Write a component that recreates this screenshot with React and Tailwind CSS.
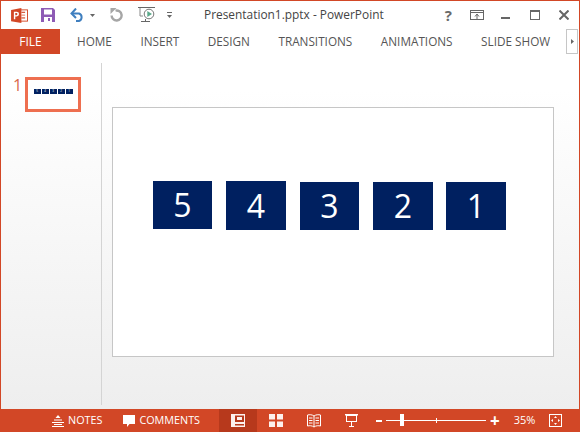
import React from "react";

const TABS = ["HOME", "INSERT", "DESIGN", "TRANSITIONS", "ANIMATIONS", "SLIDE SHOW"];

// numbers on the slide, with the small slip each box has
const BOXES = [
  { n: 5, cls: "w-[59px] h-[48px]", mt: "mt-0" },
  { n: 4, cls: "w-[60px] h-[49px]", mt: "mt-0" },
  { n: 3, cls: "w-[59px] h-[48px]", mt: "mt-px" },
  { n: 2, cls: "w-[60px] h-[48px]", mt: "mt-px" },
  { n: 1, cls: "w-[60px] h-[48px] -ml-px", mt: "mt-px" },
];

function PptIcon() {
  return (
    <svg width="17" height="15" viewBox="0 0 18 16" className="block">
      <rect x="8" y="2" width="9.5" height="12" fill="#fff" stroke="#d24726" />
      <rect x="11" y="4" width="4" height="1.2" fill="#d24726" />
      <rect x="11" y="7" width="4" height="1.2" fill="#e88a70" />
      <rect x="11" y="10" width="4" height="1.2" fill="#d24726" />
      <path d="M0 2 L11 0 V16 L0 14 Z" fill="#d24726" />
      <path d="M3 12 V4 H6 A2.4 2.4 0 0 1 6 9 H4.5 V12 Z M4.5 5.4 V7.6 H5.7 A1.1 1.1 0 0 0 5.7 5.4 Z" fill="#fff" fillRule="evenodd" />
    </svg>
  );
}

function SaveIcon() {
  return (
    <svg width="14" height="14" viewBox="0 0 14 14" className="block">
      <path d="M0 0 H12 L14 2 V14 H0 Z" fill="#8e5bb5" />
      <rect x="3" y="1.5" width="8" height="5" fill="#fff" />
      <rect x="3" y="9" width="8" height="5" fill="#fff" />
      <rect x="7" y="10" width="2" height="3" fill="#8e5bb5" />
    </svg>
  );
}

function UndoIcon() {
  return (
    <svg width="15" height="14" viewBox="0 0 15 14" className="block" fill="none">
      <path d="M2 5.5 H9 A4 4 0 0 1 9 13 H6" stroke="#3f7fbf" strokeWidth="2" />
      <path d="M6 0.5 L1.5 5.5 L6 10" stroke="#3f7fbf" strokeWidth="2" />
    </svg>
  );
}

function Caret({ color = "#666" }) {
  return (
    <svg width="5" height="3" viewBox="0 0 5 3" className="block">
      <path d="M0 0 H5 L2.5 3 Z" fill={color} />
    </svg>
  );
}

function RedoIcon() {
  return (
    <svg width="13" height="14" viewBox="0 0 13 14" className="block" fill="none">
      <path d="M5.5 2.6 A5 5 0 1 1 1.6 7.5" stroke="#a6a6a6" strokeWidth="2.4" />
      <path d="M0.5 0 H6.5 L0.5 6 Z" fill="#a6a6a6" />
    </svg>
  );
}

function StartShowIcon() {
  return (
    <svg width="17" height="16" viewBox="0 0 17 16" className="block" fill="none">
      <path d="M0 0.5 H17" stroke="#666" />
      <path d="M2 1 V9 H5" stroke="#888" />
      <circle cx="11" cy="7" r="4.8" fill="#fff" stroke="#777" />
      <path d="M9.3 4 L14 7 L9.3 10 Z" fill="#5ba98a" />
      <path d="M7.5 12 V15 M3 14.5 H12" stroke="#666" />
    </svg>
  );
}

function QatMore() {
  return (
    <svg width="5" height="6" viewBox="0 0 5 6" className="block">
      <rect width="5" height="1" fill="#666" />
      <path d="M0 3 H5 L2.5 6 Z" fill="#666" />
    </svg>
  );
}

function WindowButtons() {
  return (
    <div className="flex items-center">
      <span className="text-[15px] font-bold leading-none text-[#6a6a6a]">?</span>
      <svg width="14" height="10" viewBox="0 0 14 10" className="block ml-[18px]">
        <rect x="0.5" y="0.5" width="13" height="9" fill="none" stroke="#666" />
        <path d="M0.5 2.5 H13.5" stroke="#666" />
        <path d="M7 9 V5 M5 6.5 L7 4 L9 6.5" stroke="#666" fill="none" />
      </svg>
      <div className="w-[9px] h-[2px] bg-[#666] ml-[17px] mt-[6px]" />
      <div className="w-[10px] h-[10px] border border-[#666] border-t-[2px] ml-[20px]" />
      <svg width="10" height="10" viewBox="0 0 10 10" className="block ml-[19px]">
        <path d="M0.5 0.5 L9.5 9.5 M9.5 0.5 L0.5 9.5" stroke="#666" strokeWidth="2" />
      </svg>
    </div>
  );
}

function NotesIcon() {
  return (
    <svg width="12" height="12" viewBox="0 0 12 12" className="block">
      <path d="M6 0 L8.5 3 H3.5 Z" fill="#fff" />
      <path d="M2 5 H10 M0 7.5 H12 M2 9.5 H10 M0 11.5 H12" stroke="#fff" />
    </svg>
  );
}

function CommentsIcon() {
  return (
    <svg width="12" height="12" viewBox="0 0 12 12" className="block">
      <path d="M0 0 H12 V9 H6.5 L4 12 V9 H0 Z" fill="#fff" />
    </svg>
  );
}

function NormalViewIcon() {
  return (
    <svg width="14" height="13" viewBox="0 0 14 13" className="block">
      <path d="M0 0 H14 V13 H0 Z M4 1.5 V8 H13 V1.5 Z M4 10 V11.5 H13 V10 Z" fill="#fdf1ed" fillRule="evenodd" />
      <rect x="6" y="3" width="5" height="3" fill="#fdf1ed" />
    </svg>
  );
}

function SorterIcon() {
  return (
    <svg width="14" height="13" viewBox="0 0 14 13" className="block">
      <path d="M0 0 H6 V5.5 H0 Z M8 0 H14 V5.5 H8 Z M0 7.5 H6 V13 H0 Z M8 7.5 H14 V13 H8 Z" fill="#fdf1ed" />
    </svg>
  );
}

function ReadingIcon() {
  return (
    <svg width="14" height="14" viewBox="0 0 14 14" className="block" fill="none">
      <path d="M7 2 C5 0.5 2.5 0.5 0.5 1 V12 C2.5 11.5 5 11.5 7 13 C9 11.5 11.5 11.5 13.5 12 V1 C11.5 0.5 9 0.5 7 2 Z M7 2 V13" stroke="#fff" />
      <path d="M2 4 H5.5 M2 6.5 H5.5 M2 9 H5.5 M8.5 4 H12 M8.5 6.5 H12 M8.5 9 H12" stroke="#fff" />
    </svg>
  );
}

function PresenterIcon() {
  return (
    <svg width="13" height="13" viewBox="0 0 13 13" className="block" fill="none">
      <path d="M0 0.75 H13" stroke="#fff" strokeWidth="1.5" />
      <rect x="1.5" y="1.5" width="10" height="6" stroke="#fff" />
      <path d="M6.5 8 V12.5 M4 12.5 H9" stroke="#fff" />
    </svg>
  );
}

function FitIcon() {
  return (
    <svg width="13" height="13" viewBox="0 0 13 13" className="block" fill="none">
      <rect x="0.5" y="0.5" width="12" height="12" stroke="#fff" />
      <path d="M6.5 2 L8 4 H5 Z M6.5 11 L8 9 H5 Z M2 6.5 L4 5 V8 Z M11 6.5 L9 5 V8 Z" fill="#fff" />
    </svg>
  );
}

export default function App() {
  return (
    <div
      className="relative w-[580px] h-[432px] bg-white border-x border-t border-[#d24726] overflow-hidden flex flex-col text-[#5f5f5f]"
      style={{ fontFamily: '"Open Sans", "Noto Sans", sans-serif' }}
    >
      {/* title bar */}
      <div className="h-[28px] shrink-0 flex items-center">
        <div className="ml-[10px]"><PptIcon /></div>
        <div className="ml-[13px]"><SaveIcon /></div>
        <div className="ml-[15px]"><UndoIcon /></div>
        <div className="ml-[5px]"><Caret /></div>
        <div className="ml-[15px]"><RedoIcon /></div>
        <div className="ml-[15px]"><StartShowIcon /></div>
        <div className="ml-[12px]"><QatMore /></div>
        <div className="ml-[32px] text-[11.9px] text-[#444] whitespace-nowrap">Presentation1.pptx - PowerPoint</div>
        <div className="ml-auto mr-[10px]"><WindowButtons /></div>
      </div>

      {/* ribbon tabs */}
      <div className="h-[25px] shrink-0 flex items-center">
        <div className="w-[59px] h-[25px] bg-[#d24726] text-white text-[12px] flex items-center justify-center">FILE</div>
        <div className="ml-[17px] flex gap-[28.5px] text-[11.75px] text-[#555] whitespace-nowrap">
          {TABS.map((t) => (
            <span key={t}>{t}</span>
          ))}
        </div>
        <div className="ml-auto mr-px w-[12px] h-[25px] border border-[#c6c6c6] bg-white flex items-center justify-center">
          <svg width="3" height="5" viewBox="0 0 3 5" className="block"><path d="M0 0 L3 2.5 L0 5 Z" fill="#666" /></svg>
        </div>
      </div>

      {/* workspace */}
      <div className="flex-1 flex bg-gradient-to-b from-white from-10% to-[#eeeeee]">
        <div className="w-[101px] shrink-0 border-r border-[#d4d4d4] mt-[9px] mb-[4px]">
          <div className="flex items-start pt-[14px] pl-[12px]">
            <span className="w-[12px] text-[16px] leading-[16px] text-[#d9694c]">1</span>
            <div className="w-[56px] h-[35px] border-[3px] border-[#ee6f50] bg-white flex justify-center pt-[9px] gap-px">
              {BOXES.map((b) => (
                <div key={b.n} className="w-[7px] h-[5px] bg-[#002060] text-white text-[3px] leading-[5px] text-center">{b.n}</div>
              ))}
            </div>
          </div>
        </div>
        <div className="flex-1 pl-[10px] pt-[53px]">
          <div className="w-[442px] h-[250px] bg-white border border-[#c6c6c6] pt-[73px] pl-[40px] flex items-start gap-[14px]">
            {BOXES.map((b) => (
              <div
                key={b.n}
                className={`${b.cls} ${b.mt} bg-[#002060] text-white text-[32px] font-medium leading-none flex items-center justify-center`}
              >
                {b.n}
              </div>
            ))}
          </div>
        </div>
      </div>

      {/* status bar */}
      <div className="h-[23px] shrink-0 bg-[#d24726] text-white text-[10.8px] flex items-center whitespace-nowrap">
        <div className="ml-[51px]"><NotesIcon /></div>
        <span className="ml-[4px]">NOTES</span>
        <div className="ml-[21px]"><CommentsIcon /></div>
        <span className="ml-[4px]">COMMENTS</span>
        <div className="ml-[19px] w-[38px] h-[23px] bg-[#b7391c] flex items-center justify-center"><NormalViewIcon /></div>
        <div className="ml-[12px]"><SorterIcon /></div>
        <div className="ml-[24px]"><ReadingIcon /></div>
        <div className="ml-[24px]"><PresenterIcon /></div>
        <div className="ml-[18px] w-[6px] h-[2px] bg-white" />
        <div className="ml-[4px] w-[100px] h-[1px] bg-white relative">
          <div className="absolute left-[14px] top-[-6px] w-[4px] h-[12px] bg-white" />
          <div className="absolute left-[50px] top-[-2px] w-px h-[5px] bg-white" />
        </div>
        <div className="ml-[4px] text-[17px] font-bold leading-none">+</div>
        <span className="ml-[14px] text-[11px]">35%</span>
        <div className="ml-[14px]"><FitIcon /></div>
      </div>
    </div>
  );
}
